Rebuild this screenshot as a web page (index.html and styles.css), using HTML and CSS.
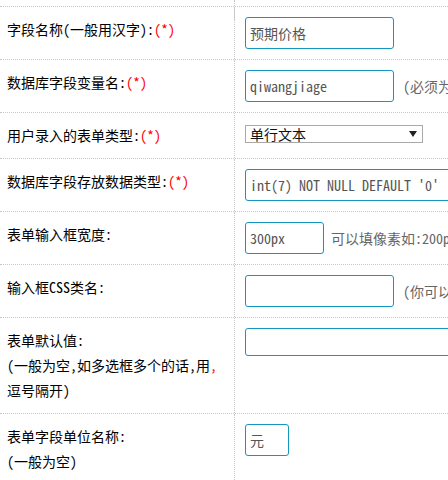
FILE: index.html
```html
<!DOCTYPE html>
<html lang="zh-CN">
<head>
<meta charset="utf-8">
<title>字段设置</title>
<link rel="stylesheet" href="styles.css">
</head>
<body>
<div class="form">
  <div class="row row-top"><div class="label"></div><div class="field"></div></div>

  <div class="row">
    <div class="label">字段名称(一般用汉字):<span class="req">(*)</span></div>
    <div class="field"><div class="input w150 cjk">预期价格</div></div>
  </div>

  <div class="row">
    <div class="label">数据库字段变量名:<span class="req">(*)</span></div>
    <div class="field"><div class="input w150 mono">qiwangjiage</div><span class="hint">(必须为</span></div>
  </div>

  <div class="row">
    <div class="label">用户录入的表单类型:<span class="req">(*)</span></div>
    <div class="field"><div class="select"><span>单行文本</span><span class="arrow"></span></div></div>
  </div>

  <div class="row">
    <div class="label">数据库字段存放数据类型:<span class="req">(*)</span></div>
    <div class="field"><div class="input wide mono">int(7) NOT NULL DEFAULT '0'</div></div>
  </div>

  <div class="row">
    <div class="label">表单输入框宽度:</div>
    <div class="field field-tight"><div class="input w79 mono">300px</div><span class="hint">可以填像素如:200p</span></div>
  </div>

  <div class="row">
    <div class="label">输入框CSS类名:</div>
    <div class="field"><div class="input w150"></div><span class="hint">(你可以</span></div>
  </div>

  <div class="row">
    <div class="label">表单默认值:<br>(一般为空,如多选框多个的话,用<span class="req">,</span><br>逗号隔开)</div>
    <div class="field"><div class="input wide short"></div></div>
  </div>

  <div class="row">
    <div class="label">表单字段单位名称:<br>(一般为空)</div>
    <div class="field"><div class="input w44 cjk">元</div></div>
  </div>
</div>
</body>
</html>
```

FILE: styles.css
```css
* { box-sizing: border-box; }

html, body {
  margin: 0;
  padding: 0;
  overflow: hidden;
  background: #fff;
}

body {
  width: 448px;
  height: 480px;
  font-family: "Noto Sans Mono CJK SC", "Noto Sans CJK SC", "Noto Sans", sans-serif;
  font-size: 14px;
  font-weight: 300;
  color: #000;
}

.form {
  width: 700px;
}

.row {
  display: grid;
  grid-template-columns: 235px 465px;
  border-bottom: 1px dotted #c8c8c8;
}

.row-top {
  height: 7px;
}

.label {
  border-right: 1px dotted #c8c8c8;
  padding: 10px 0 10px 7px;
  line-height: 25px;
  white-space: nowrap;
}

.req {
  color: #f00;
}

.field {
  align-self: start;
  display: flex;
  align-items: center;
  gap: 9px;
  padding: 10px 0 10px 10px;
  white-space: nowrap;
}

.field-tight {
  gap: 7px;
}

.input {
  height: 32px;
  border: 1px solid #1497bd;
  border-radius: 3px;
  padding: 0 4px;
  display: flex;
  align-items: center;
  color: #555;
  background: #fff;
}

.cjk {
  font-size: 14px;
}

.mono {
  font-family: "Noto Sans Mono CJK SC", "Liberation Mono", monospace;
  font-size: 14px;
}

.w150 { width: 149px; }
.w79 { width: 79px; }
.w44 { width: 44px; }
.wide { width: 320px; }
.short { height: 28px; }

.hint {
  color: #666;
}

.select {
  margin-top: 2px;
  width: 178px;
  height: 18px;
  border: 1px solid #a9a9a9;
  padding: 0 5px 0 4px;
  display: flex;
  align-items: center;
  justify-content: space-between;
  line-height: 16px;
  color: #111;
}

.arrow {
  width: 0;
  height: 0;
  border-left: 4px solid transparent;
  border-right: 4px solid transparent;
  border-top: 6px solid #222;
}
```
